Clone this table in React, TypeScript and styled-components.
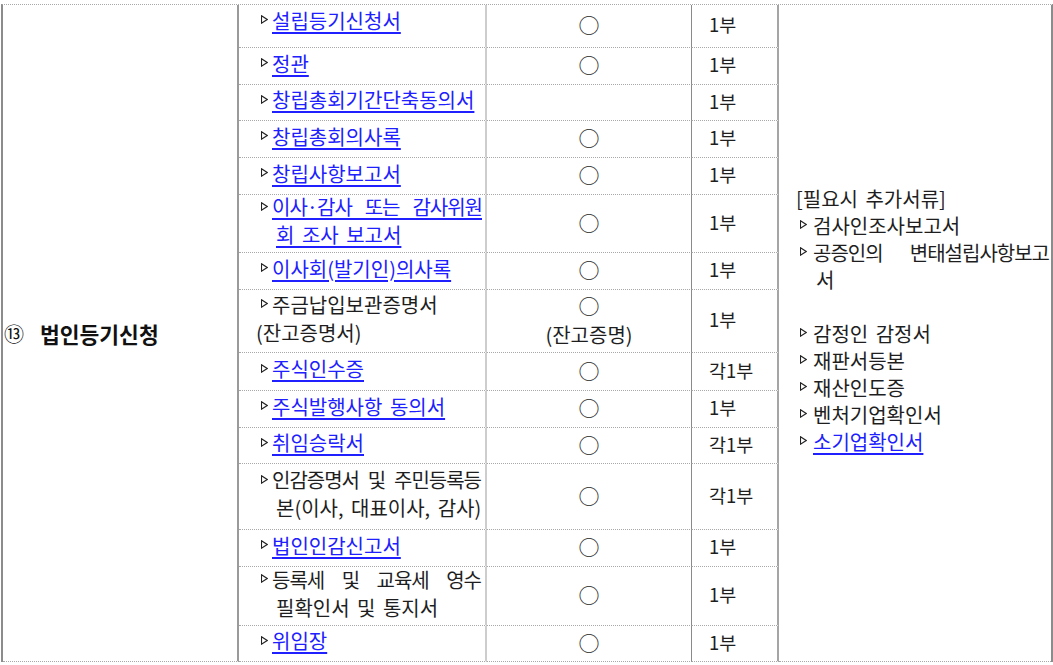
import styled, { createGlobalStyle } from 'styled-components'

const GlobalStyle = createGlobalStyle`
  html, body {
    margin: 0;
    padding: 0;
    background: #fff;
  }
  body {
    font-family: "Noto Sans CJK KR", "Noto Sans", sans-serif;
    color: #1e1e1e;
  }
`

const Page = styled.div`
  padding: 4px 1px 0 1px;
`

const Sheet = styled.div<{ $rows: number[] }>`
  display: grid;
  box-sizing: border-box;
  width: 1052px;
  grid-template-columns: 236px 248px 205px 87px 272px;
  grid-template-rows: ${({ $rows }) => $rows.map((h) => `${h}px`).join(' ')};
  border-top: 1px dotted #a8a8a8;
  border-left: 2px solid #8c8c8c;
  border-right: 2px solid #8c8c8c;
`

const HeaderCell = styled.div`
  grid-column: 1;
  grid-row: 1 / -1;
  box-sizing: border-box;
  display: flex;
  align-items: center;
  padding-left: 1px;
  border-right: 2px solid #9a9a9a;
  border-bottom: 1px dotted #a8a8a8;
  font-size: 21.5px;
  font-weight: 700;
  color: #111;
`

const Circled = styled.span`
  font-size: 20px;
  font-weight: 400;
  margin-right: 16px;
`

const ItemCell = styled.div<{ $lift: number }>`
  box-sizing: border-box;
  display: flex;
  flex-direction: column;
  justify-content: center;
  padding: 0 0 ${({ $lift }) => $lift}px 17px;
  border-right: 2px solid #cdcdcd;
  border-bottom: 1px dotted #a8a8a8;
  font-size: 20px;
`

const CheckCell = styled.div`
  box-sizing: border-box;
  display: flex;
  flex-direction: column;
  justify-content: center;
  align-items: center;
  padding-bottom: 4px;
  border-right: 1px solid #8a8a8a;
  border-bottom: 1px dotted #a8a8a8;
  font-size: 20px;
`

const CountCell = styled.div`
  box-sizing: border-box;
  display: flex;
  align-items: center;
  padding: 0 0 4px 17px;
  border-right: 2px solid #a5a5a5;
  border-bottom: 1px dotted #a8a8a8;
  font-size: 18.5px;
`

const ExtraCell = styled.div`
  grid-column: 5;
  grid-row: 1 / -1;
  box-sizing: border-box;
  display: flex;
  flex-direction: column;
  justify-content: center;
  padding-left: 17px;
  border-bottom: 1px dotted #a8a8a8;
  font-size: 20px;
`

const Line = styled.div<{ $height: number; $indent?: number }>`
  display: flex;
  align-items: center;
  height: ${({ $height }) => $height}px;
  padding-left: ${({ $indent }) => $indent ?? 0}px;
  white-space: nowrap;
`

const Circle = styled.span`
  font-size: 21px;
`

const Marker = styled.svg<{ $left: number; $gap: number }>`
  flex: none;
  width: 7px;
  height: 9px;
  margin: 0 ${({ $gap }) => $gap}px 1px ${({ $left }) => $left}px;
`

const Words = styled.span<{ $link?: boolean; $justify?: number }>`
  display: inline-block;
  width: ${({ $justify }) => ($justify ? `${$justify}px` : 'auto')};
  text-align: justify;
  text-align-last: ${({ $justify }) => ($justify ? 'justify' : 'auto')};
  word-spacing: ${({ $justify }) => ($justify ? '0' : '3px')};
  letter-spacing: ${({ $justify }) => ($justify ? '-1px' : 'normal')};
  color: ${({ $link }) => ($link ? '#2020ff' : 'inherit')};
  text-decoration: ${({ $link }) => ($link ? 'underline' : 'none')};
  text-underline-offset: 3px;
`

function Tri({ left, gap }: { left: number; gap: number }) {
  return (
    <Marker $left={left} $gap={gap} viewBox="0 0 7 9">
      <polygon points="0.5,0.8 6.2,4.5 0.5,8.2" fill="none" stroke="#222" strokeWidth="1.1" />
    </Marker>
  )
}

type Item = {
  lines: string[]
  link?: boolean
  justify?: number
  indent?: number
  check: string[]
  count: string
  height: number
  lift?: number
}

const items: Item[] = [
  { lines: ['설립등기신청서'], link: true, check: ['○'], count: '1부', height: 43, lift: 12 },
  { lines: ['정관'], link: true, check: ['○'], count: '1부', height: 37 },
  { lines: ['창립총회기간단축동의서'], link: true, check: [], count: '1부', height: 36 },
  { lines: ['창립총회의사록'], link: true, check: ['○'], count: '1부', height: 37 },
  { lines: ['창립사항보고서'], link: true, check: ['○'], count: '1부', height: 37 },
  { lines: ['이사·감사 또는 감사위원', '회 조사 보고서'], link: true, justify: 210, indent: 20, check: ['○'], count: '1부', height: 58 },
  { lines: ['이사회(발기인)의사록'], link: true, check: ['○'], count: '1부', height: 37 },
  { lines: ['주금납입보관증명서', '(잔고증명서)'], indent: 0, check: ['○', '(잔고증명)'], count: '1부', height: 63 },
  { lines: ['주식인수증'], link: true, check: ['○'], count: '각1부', height: 38 },
  { lines: ['주식발행사항 동의서'], link: true, check: ['○'], count: '1부', height: 37 },
  { lines: ['취임승락서'], link: true, check: ['○'], count: '각1부', height: 36 },
  { lines: ['인감증명서 및 주민등록등', '본(이사, 대표이사, 감사)'], justify: 209, indent: 20, check: ['○'], count: '각1부', height: 66 },
  { lines: ['법인인감신고서'], link: true, check: ['○'], count: '1부', height: 37 },
  { lines: ['등록세 및 교육세 영수', '필확인서 및 통지서'], justify: 209, indent: 20, check: ['○'], count: '1부', height: 59 },
  { lines: ['위임장'], link: true, check: ['○'], count: '1부', height: 36 },
]

type Extra = { text: string; marker?: boolean; link?: boolean; justify?: number; indent?: number }

const extras: Extra[] = [
  { text: '[필요시 추가서류]' },
  { text: '검사인조사보고서', marker: true },
  { text: '공증인의 변태설립사항보고', marker: true, justify: 236 },
  { text: '서', indent: 20 },
  { text: '' },
  { text: '감정인 감정서', marker: true },
  { text: '재판서등본', marker: true },
  { text: '재산인도증', marker: true },
  { text: '벤처기업확인서', marker: true },
  { text: '소기업확인서', marker: true, link: true },
  { text: '' },
]

export default function App() {
  return (
    <Page>
      <GlobalStyle />
      <Sheet $rows={items.map((it) => it.height)}>
        <HeaderCell>
          <Circled>⑬</Circled>법인등기신청
        </HeaderCell>
        <ExtraCell>
          {extras.map((ex, i) => (
            <Line key={i} $height={27} $indent={ex.indent}>
              {ex.marker && <Tri left={4} gap={6} />}
              {ex.text && (
                <Words as={ex.link ? 'a' : 'span'} href={ex.link ? '#' : undefined} $link={ex.link} $justify={ex.justify}>
                  {ex.text}
                </Words>
              )}
            </Line>
          ))}
        </ExtraCell>
        {items.map((it, i) => [
          <ItemCell key={`item-${i}`} $lift={it.lift ?? 6}>
            {it.lines.map((text, j) => (
              <Line key={j} $height={28} $indent={j > 0 ? it.indent : 0}>
                {j === 0 && <Tri left={5} gap={4} />}
                <Words
                  as={it.link ? 'a' : 'span'}
                  href={it.link ? '#' : undefined}
                  $link={it.link}
                  $justify={j === 0 && it.lines.length > 1 ? it.justify : undefined}
                >
                  {text}
                </Words>
              </Line>
            ))}
          </ItemCell>,
          <CheckCell key={`check-${i}`}>
            {it.check.map((c, j) => (
              <Line key={j} $height={32}>
                {c === '○' ? <Circle>{c}</Circle> : c}
              </Line>
            ))}
          </CheckCell>,
          <CountCell key={`count-${i}`}>{it.count}</CountCell>,
        ])}
      </Sheet>
    </Page>
  )
}
